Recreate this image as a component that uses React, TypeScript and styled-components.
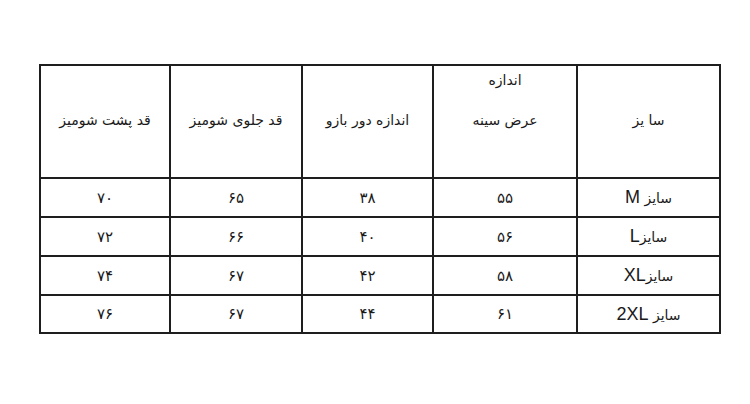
import React from "react";
import styled, { createGlobalStyle } from "styled-components";

const Global = createGlobalStyle`
  html, body { margin: 0; padding: 0; background: #ffffff; }
  body { font-family: "DejaVu Sans", "Noto Sans", sans-serif; color: #1a1a1a; }
`;

const Page = styled.div`
  width: 750px;
  height: 404px;
  padding: 64px 0 0 39px;
  box-sizing: border-box;
`;

const Table = styled.table`
  direction: rtl;
  border-collapse: collapse;
  table-layout: fixed;
  width: 680px;
  border: 2px solid #1e1e1e;
`;

const Col = styled.col<{ $w: number }>`
  width: ${(p) => p.$w}px;
`;

const HeadCell = styled.th`
  height: 108px;
  border: 2px solid #1e1e1e;
  padding: 0 0 3px 0;
  font-weight: normal;
  font-size: 14px;
  text-align: center;
  vertical-align: middle;
  line-height: 20px;
`;

const Stack = styled.div`
  display: flex;
  flex-direction: column;
  align-items: center;
  gap: 20px;
  padding-bottom: 40px;
`;

const Row = styled.tr<{ $h: number }>`
  height: ${(p) => p.$h}px;
`;

const Cell = styled.td`
  border: 2px solid #1e1e1e;
  padding: 0;
  font-size: 15px;
  text-align: center;
  vertical-align: middle;
`;

const SizeLabel = styled.span`
  font-size: 14px;
`;

const Latin = styled.span`
  font-family: "Liberation Sans", Arial, sans-serif;
  font-size: 18px;
  direction: ltr;
  unicode-bidi: isolate;
`;

const rows = [
  { size: "M", gap: true, chest: "۵۵", arm: "۳۸", front: "۶۵", back: "۷۰" },
  { size: "L", gap: false, chest: "۵۶", arm: "۴۰", front: "۶۶", back: "۷۲" },
  { size: "XL", gap: false, chest: "۵۸", arm: "۴۲", front: "۶۷", back: "۷۴" },
  { size: "2XL", gap: true, chest: "۶۱", arm: "۴۴", front: "۶۷", back: "۷۶" },
];

const heights = [39, 39, 39, 38];

export default function App() {
  return (
    <>
      <Global />
      <Page>
        <Table>
          <colgroup>
            <Col $w={143} />
            <Col $w={144} />
            <Col $w={131} />
            <Col $w={132} />
            <Col $w={130} />
          </colgroup>
          <thead>
            <tr>
              <HeadCell>سا یز</HeadCell>
              <HeadCell>
                <Stack>
                  <span>اندازه</span>
                  <span>عرض سینه</span>
                </Stack>
              </HeadCell>
              <HeadCell>اندازه دور بازو</HeadCell>
              <HeadCell>قد جلوی شومیز</HeadCell>
              <HeadCell>قد پشت شومیز</HeadCell>
            </tr>
          </thead>
          <tbody>
            {rows.map((r, i) => (
              <Row key={r.size} $h={heights[i]}>
                <Cell>
                  <SizeLabel>سایز{r.gap ? " " : ""}</SizeLabel>
                  <Latin>{r.size}</Latin>
                </Cell>
                <Cell>{r.chest}</Cell>
                <Cell>{r.arm}</Cell>
                <Cell>{r.front}</Cell>
                <Cell>{r.back}</Cell>
              </Row>
            ))}
          </tbody>
        </Table>
      </Page>
    </>
  );
}
